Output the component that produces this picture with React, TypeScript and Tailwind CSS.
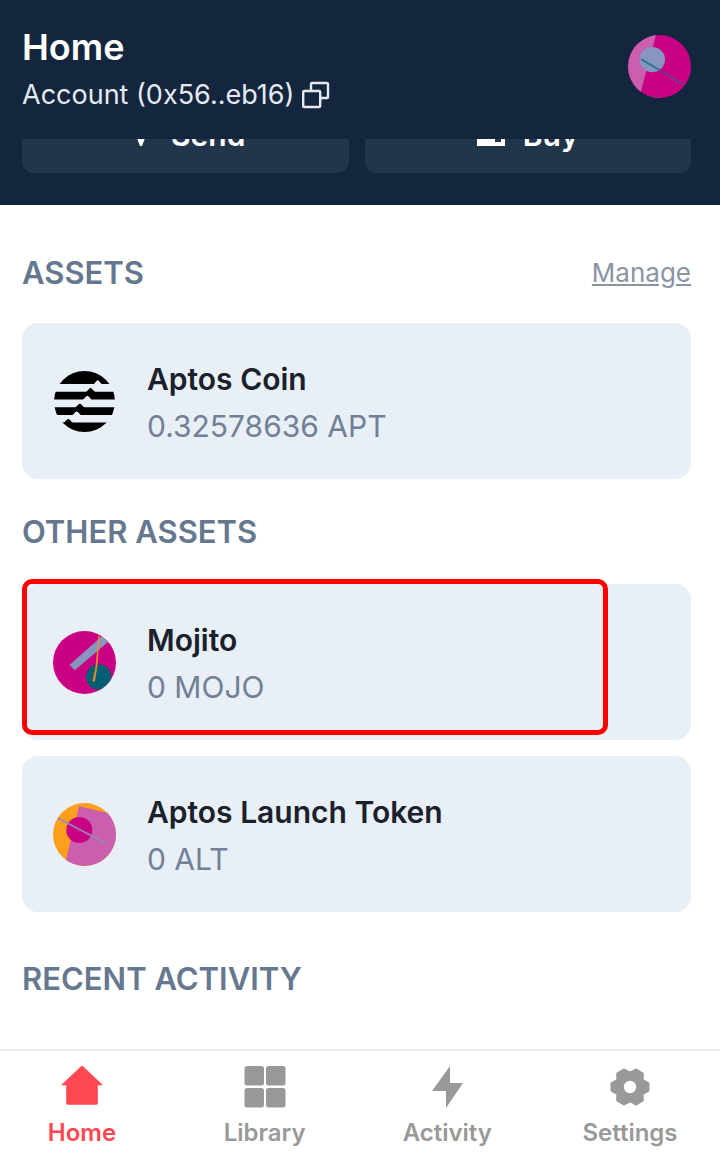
import React from 'react';

const CopyIcon = () => (
  <svg className="h-7 w-7" viewBox="0 0 28 28" fill="none" stroke="currentColor" strokeWidth="2.4">
    <rect x="1.200" y="10" width="17" height="16" rx="1" />
    <path d="M9 10V3a1 1 0 0 1 1-1h15a1 1 0 0 1 1 1v13a1 1 0 0 1-1 1h-7" />
  </svg>
);

const SendIcon = () => (
  <svg className="h-7 w-7" viewBox="0 0 28 28" fill="currentColor">
    <path d="M27-1 17 25h-2L10 12 0 9V7z" />
  </svg>
);

const WalletIcon = () => (
  <svg className="h-7 w-7" viewBox="0 0 28 28" fill="currentColor">
    <path d="M0 5h28v4H0zM0 12h28v13H0zM18 18v3h6v-3z" fillRule="evenodd" />
  </svg>
);

const AccountAvatar = () => (
  <svg className="h-[63px] w-[63px] rounded-full" viewBox="0 0 63 63">
    <rect width="63" height="63" fill="#c90084" />
    <path d="M0 0h28L13 56v7H0z" fill="#c95fae" />
    <path d="M19 60.500q6 2 13 2.500h-13z" fill="#d9a3c9" />
    <circle cx="24.300" cy="24.600" r="12.700" fill="#8795bf" />
    <path d="M13.300 24.300 31 34.800" stroke="#1f7489" strokeWidth="1.800" />
    <path d="M31 34.800 55 49.600" stroke="#65417f" strokeWidth="1.800" />
  </svg>
);

const AptosLogo = () => (
  <svg className="h-[63px] w-[63px]" viewBox="0 0 63 63">
    <clipPath id="aptos-disc">
      <circle cx="31.500" cy="31.500" r="30.500" />
    </clipPath>
    <g clipPath="url(#aptos-disc)">
      <path d="M0 0h63v14H48.500l-2.600-3a1.600 1.600 0 0 0-2.400 0L41 14H0z" />
      <path d="M0 21.700h32.500q1 0 1.700-.8l2.200-2.300q1.200-1 2.400 0l2.100 2.300q.7.8 1.700.8H63v7.800H38.400l-2.800-3a1.700 1.700 0 0 0-2.500 0l-2.200 2.300q-.6.7-1.600.7H0z" />
      <path d="M0 37.300h21.800q1 0 1.700-.8l2.200-2.300q1.200-1 2.400 0l2.100 2.300q.7.8 1.700.8H63v7.800H27.700l-2.800-3a1.700 1.700 0 0 0-2.500 0l-2.200 2.300q-.6.7-1.600.7H0z" />
      <path d="M0 52.500h10.200q1 0 1.700-.8l2.200-2.300q1.200-1 2.400 0l2.100 2.300q.7.8 1.700.8H63V63H0z" />
    </g>
  </svg>
);

const MojitoLogo = () => (
  <svg className="h-[63px] w-[63px] rounded-full" viewBox="0 0 63 63">
    <rect width="63" height="63" fill="#c90084" />
    <path d="m16.500 34 5.300 5.300L58 8.500 52.500 2z" fill="#8795bf" />
    <circle cx="45.700" cy="46" r="12.700" fill="#025f73" />
    <path d="m46 5-3 31-3 14 1.500.3L44 34z" fill="#b86b45" stroke="#f2931f" strokeWidth="0.900" />
  </svg>
);

const LaunchLogo = () => (
  <svg className="h-[63px] w-[63px] rounded-full" viewBox="0 0 63 63">
    <rect width="63" height="63" fill="#fb9f1c" />
    <path d="M26 3.300 63 12v51H11.500z" fill="#c95fae" />
    <circle cx="26.300" cy="27" r="13" fill="#c90084" />
    <path d="m4.700 15 48 25.300" stroke="#9488bb" strokeWidth="1.800" />
  </svg>
);

const HomeIcon = () => (
  <svg className="h-[42px] w-[42px]" viewBox="0 0 42 42" fill="currentColor">
    <path d="M19.800.6a1.800 1.800 0 0 1 2.400 0L42 19.200h-5.200v18.100q0 1.500-1.500 1.500H6.700q-1.500 0-1.500-1.500V19.200H0z" />
  </svg>
);

const LibraryIcon = () => (
  <svg className="h-[42px] w-[42px]" viewBox="0 0 42 42" fill="currentColor">
    <rect x="0.500" width="19.500" height="19.500" rx="2.500" />
    <rect x="22" width="19.500" height="19.500" rx="2.500" />
    <rect x="0.500" y="22" width="19.500" height="19.500" rx="2.500" />
    <rect x="22" y="22" width="19.500" height="19.500" rx="2.500" />
  </svg>
);

const ActivityIcon = () => (
  <svg className="h-[42px] w-[42px]" viewBox="0 0 42 42" fill="currentColor">
    <path d="M24 0v17h13L20 42V25H6z" />
  </svg>
);

const SettingsIcon = () => (
  <svg className="h-[42px] w-[42px]" viewBox="-21 -21 42 42">
    <path
      d="M18-3.500V3.500L12.200 6.800 12.300 13.300 6 17 0 13.600-6 17-12.300 13.300-12.200 6.800-18 3.500V-3.500L-12.200-6.800-12.300-13.300-6-17 0-13.600 6-17 12.300-13.300 12.200-6.800z"
      fill="currentColor"
      stroke="currentColor"
      strokeWidth="3"
      strokeLinejoin="round"
    />
    <circle r="6.200" fill="#fff" />
  </svg>
);

const otherAssets = [
  { name: 'Mojito', balance: '0 MOJO', icon: <MojitoLogo />, highlighted: true },
  { name: 'Aptos Launch Token', balance: '0 ALT', icon: <LaunchLogo />, highlighted: false },
];

const tabs = [
  { label: 'Home', icon: <HomeIcon />, color: 'text-[#ff4752]' },
  { label: 'Library', icon: <LibraryIcon />, color: 'text-[#999999]' },
  { label: 'Activity', icon: <ActivityIcon />, color: 'text-[#999999]' },
  { label: 'Settings', icon: <SettingsIcon />, color: 'text-[#999999]' },
];

type AssetCardProps = {
  name: string;
  balance: string;
  icon: React.ReactNode;
  highlighted?: boolean;
};

const AssetCard = ({ name, balance, icon, highlighted }: AssetCardProps) => (
  <div className="relative flex items-center gap-[31px] rounded-2xl bg-[#e8eff6] px-[31px] py-[29px]">
    {icon}
    <div className="pt-1 text-[30px] leading-[47px]">
      <p className="font-semibold text-[#1a202c]">{name}</p>
      <p className="text-[#718096]">{balance}</p>
    </div>
    {highlighted && (
      <div className="absolute -top-[5px] right-[83px] bottom-[5px] left-0 rounded-[10px] border-[5px] border-[#ff0000]" />
    )}
  </div>
);

const SectionTitle = ({ children }: { children: React.ReactNode }) => (
  <h2 className="text-[31px] leading-9 font-semibold text-[#66788f]">{children}</h2>
);

const App = () => {
  return (
    <div className="flex min-h-screen flex-col bg-white font-['Inter',sans-serif]">
      <header className="flex items-start justify-between bg-[#13263e] pt-[23px] pr-[29px] pb-5 pl-[22px] text-white">
        <div>
          <h1 className="text-[36px] leading-[48px] font-semibold">Home</h1>
          <button className="flex items-center gap-2 text-[27px] leading-[48px] text-[#e6eaf0]">
            Account (0x56..eb16)
            <CopyIcon />
          </button>
        </div>
        <button className="pt-3" aria-label="Account avatar">
          <AccountAvatar />
        </button>
      </header>

      {/* scrolled action row, its top is hidden under the header */}
      <div className="flex h-[66px] flex-col justify-end overflow-hidden bg-[#13263e] pr-[29px] pb-8 pl-[22px]">
        <div className="grid shrink-0 grid-cols-2 gap-4 text-[30px] leading-9 font-semibold text-white">
          <button className="flex items-center justify-center gap-[18px] rounded-xl bg-[#22364b] py-5">
            <SendIcon />
            Send
          </button>
          <button className="flex items-center justify-center gap-[18px] rounded-xl bg-[#22364b] py-5">
            <WalletIcon />
            Buy
          </button>
        </div>
      </div>

      <main className="flex-1 pt-[50px] pr-[29px] pl-[22px]">
        <div className="mb-8 flex items-center justify-between">
          <SectionTitle>ASSETS</SectionTitle>
          <a href="#" className="text-[26px] leading-9 text-[#8a94a3] underline">Manage</a>
        </div>
        <AssetCard name="Aptos Coin" balance="0.32578636 APT" icon={<AptosLogo />} />

        <div className="mt-[35px] mb-[34px]">
          <SectionTitle>OTHER ASSETS</SectionTitle>
        </div>
        <div className="flex flex-col gap-4">
          {otherAssets.map((asset) => (
            <AssetCard key={asset.name} {...asset} />
          ))}
        </div>

        <div className="mt-[49px]">
          <SectionTitle>RECENT ACTIVITY</SectionTitle>
        </div>
      </main>

      <nav className="flex justify-between border-t-2 border-[#ebebeb] pt-[15px] pr-10 pb-[11px] pl-8">
        {tabs.map((tab) => (
          <a
            key={tab.label}
            href="#"
            className={`flex w-[100px] flex-col items-center gap-[9px] text-[24px] leading-8 font-semibold ${tab.color}`}
          >
            {tab.icon}
            {tab.label}
          </a>
        ))}
      </nav>
    </div>
  );
};

export default App;
